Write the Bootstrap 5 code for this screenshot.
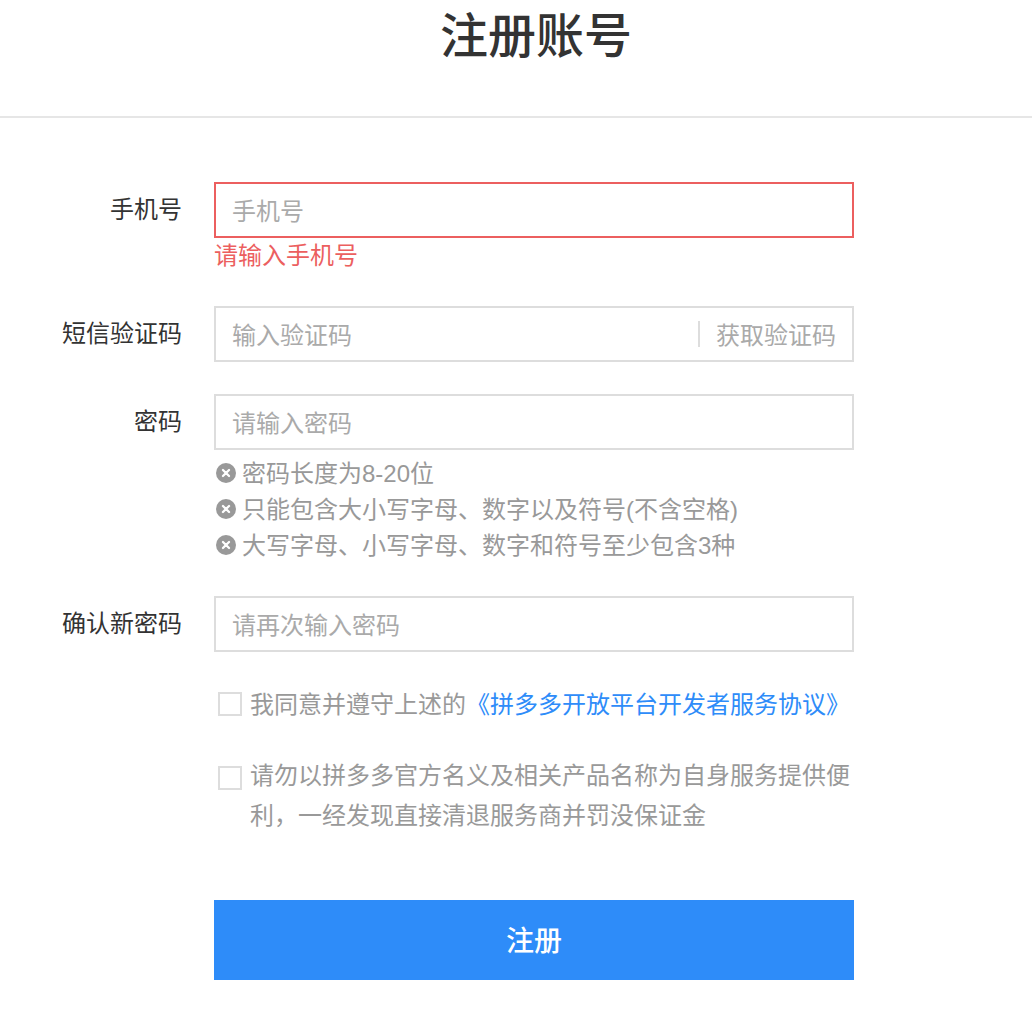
<!DOCTYPE html>
<html lang="zh"><head><meta charset="utf-8">
<link href="https://cdn.jsdelivr.net/npm/bootstrap@5.3.0/dist/css/bootstrap.min.css" rel="stylesheet">
<style>
html,body{background:#fff;margin:0}
body{font-family:"Liberation Sans","Noto Sans CJK SC",sans-serif;height:1034px;overflow:hidden;color:#333}
.reg-head{height:118px;border-bottom:2px solid #e6e6e6;text-align:center;padding-left:40px;padding-top:1px}
.reg-head h1{font-size:48px;line-height:72px;font-weight:500;margin:0;color:#333}
.reg-form{width:854px;padding-top:64px}
.reg-row{display:flex}
.gap-a{margin-top:32px}
.gap-b{margin-top:33px}
.gap-c{margin-top:31px}
.gap-d{margin-top:64px}
.reg-label{width:182px;font-size:24px;line-height:56px;text-align:right;flex:none;margin-right:32px;color:#333}
.reg-main{width:640px;flex:none}
.reg-field{height:56px;border:2px solid #ddd;display:flex;align-items:center;padding:0 16px;font-size:24px;color:#aaa;background:#fff}
.reg-field input{border:0;outline:0;flex:1;min-width:0;font-size:24px;padding:4px 0 0;color:#333;background:transparent;font-family:inherit}
.reg-field input::placeholder{color:#aaa;opacity:1}
.reg-field.is-bad{border-color:#ec5f5f}
.reg-err{color:#ec5f5f;font-size:24px;line-height:36px}
.reg-code{border-left:2px solid #ddd;padding-left:16px;line-height:26px;white-space:nowrap;color:#aaa}
.reg-code-txt{position:relative;top:2px}
.reg-rules{margin-top:6px}
.reg-rule{display:flex;align-items:center;gap:6px;font-size:24px;line-height:36px;color:#999}
.reg-rule svg{flex:none;width:20px;height:20px;margin:-2px 0 0 2px}
.reg-check{display:flex;font-size:24px;line-height:40px;color:#999}
.reg-box{flex:none;width:24px;height:24px;border:2px solid #ddd;margin:7px 8px 0 4px;background:#fff}
.reg-box-low{margin-top:10px}
.reg-link{color:#2e8cf9}
.reg-btn{display:block;width:640px;height:80px;background:#2e8cf9;border:0;border-radius:0;color:#fff;font-size:28px;font-weight:500;padding-top:9px}
.reg-btn:hover{background:#2e8cf9;color:#fff}
</style></head><body>
<div class="reg-head"><h1>注册账号</h1></div>
<form class="reg-form">
<div class="reg-row"><div class="reg-label">手机号</div><div class="reg-main"><div class="reg-field is-bad"><input placeholder="手机号"></div><div class="reg-err">请输入手机号</div></div></div>
<div class="reg-row gap-a"><div class="reg-label">短信验证码</div><div class="reg-main"><div class="reg-field"><input placeholder="输入验证码"><span class="reg-code"><span class="reg-code-txt">获取验证码</span></span></div></div></div>
<div class="reg-row gap-a"><div class="reg-label">密码</div><div class="reg-main"><div class="reg-field"><input placeholder="请输入密码"></div>
<div class="reg-rules">
<div class="reg-rule"><svg viewBox="0 0 21 21"><circle cx="10.5" cy="10.5" r="10.5" fill="#999"/><path d="M7.3 7.3l6.4 6.4M13.7 7.3l-6.4 6.4" stroke="#fff" stroke-width="2.4" stroke-linecap="round"/></svg>密码长度为8-20位</div>
<div class="reg-rule"><svg viewBox="0 0 21 21"><circle cx="10.5" cy="10.5" r="10.5" fill="#999"/><path d="M7.3 7.3l6.4 6.4M13.7 7.3l-6.4 6.4" stroke="#fff" stroke-width="2.4" stroke-linecap="round"/></svg>只能包含大小写字母、数字以及符号(不含空格)</div>
<div class="reg-rule"><svg viewBox="0 0 21 21"><circle cx="10.5" cy="10.5" r="10.5" fill="#999"/><path d="M7.3 7.3l6.4 6.4M13.7 7.3l-6.4 6.4" stroke="#fff" stroke-width="2.4" stroke-linecap="round"/></svg>大写字母、小写字母、数字和符号至少包含3种</div>
</div></div></div>
<div class="reg-row gap-a"><div class="reg-label">确认新密码</div><div class="reg-main"><div class="reg-field"><input placeholder="请再次输入密码"></div></div></div>
<div class="reg-row gap-b"><div class="reg-label"></div><div class="reg-main"><div class="reg-check"><span class="reg-box"></span><span>我同意并遵守上述的<span class="reg-link">《拼多多开放平台开发者服务协议》</span></span></div></div></div>
<div class="reg-row gap-c"><div class="reg-label"></div><div class="reg-main"><div class="reg-check"><span class="reg-box reg-box-low"></span><span>请勿以拼多多官方名义及相关产品名称为自身服务提供便利，一经发现直接清退服务商并罚没保证金</span></div></div></div>
<div class="reg-row gap-d"><div class="reg-label"></div><div class="reg-main"><button type="button" class="btn reg-btn">注册</button></div></div>
</form>
</body></html>
